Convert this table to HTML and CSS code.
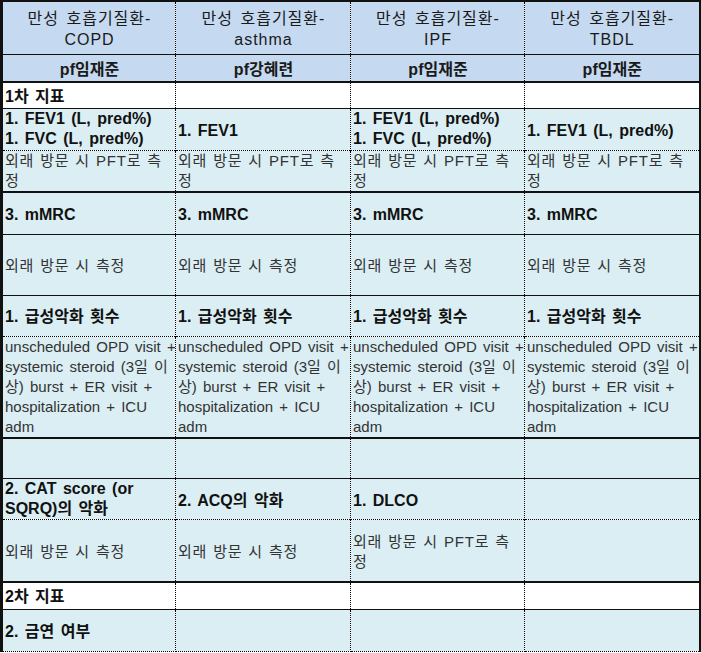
FILE: index.html
```html
<!DOCTYPE html>
<html lang="ko">
<head>
<meta charset="utf-8">
<title>만성 호흡기질환 지표</title>
<link rel="stylesheet" href="styles.css">
</head>
<body>
<table class="sheet">
  <colgroup>
    <col class="c1"><col class="c2"><col class="c3"><col class="c4">
  </colgroup>
  <tr class="r-head1 head">
    <td>만성 호흡기질환-<br>COPD</td>
    <td>만성 호흡기질환-<br>asthma</td>
    <td>만성 호흡기질환-<br>IPF</td>
    <td>만성 호흡기질환-<br>TBDL</td>
  </tr>
  <tr class="r-head2 head b-thin">
    <td class="bold">pf임재준</td>
    <td class="bold">pf강혜련</td>
    <td class="bold">pf임재준</td>
    <td class="bold">pf임재준</td>
  </tr>
  <tr class="r-sec white b-thick">
    <td class="bold">1차 지표</td><td></td><td></td><td></td>
  </tr>
  <tr class="r-fev b-thin">
    <td class="bold">1. FEV1 (L, pred%)<br>1. FVC (L, pred%)</td>
    <td class="bold pad">1. FEV1</td>
    <td class="bold">1. FEV1 (L, pred%)<br>1. FVC (L, pred%)</td>
    <td class="bold pad">1. FEV1 (L, pred%)</td>
  </tr>
  <tr class="r-pft b-dot">
    <td class="ko">외래 방문 시 PFT로 측<br>정</td>
    <td class="ko">외래 방문 시 PFT로 측<br>정</td>
    <td class="ko">외래 방문 시 PFT로 측<br>정</td>
    <td class="ko">외래 방문 시 PFT로 측<br>정</td>
  </tr>
  <tr class="r-mmrc b-thick">
    <td class="bold">3. mMRC</td>
    <td class="bold">3. mMRC</td>
    <td class="bold">3. mMRC</td>
    <td class="bold">3. mMRC</td>
  </tr>
  <tr class="r-meas b-thin">
    <td class="ko">외래 방문 시 측정</td>
    <td class="ko">외래 방문 시 측정</td>
    <td class="ko">외래 방문 시 측정</td>
    <td class="ko">외래 방문 시 측정</td>
  </tr>
  <tr class="r-exac b-thin">
    <td class="bold">1. 급성악화 횟수</td>
    <td class="bold">1. 급성악화 횟수</td>
    <td class="bold">1. 급성악화 횟수</td>
    <td class="bold">1. 급성악화 횟수</td>
  </tr>
  <tr class="r-visit b-dot">
    <td>unscheduled OPD visit +<br>systemic steroid (3일 이<br>상) burst + ER visit +<br>hospitalization + ICU<br>adm</td>
    <td>unscheduled OPD visit +<br>systemic steroid (3일 이<br>상) burst + ER visit +<br>hospitalization + ICU<br>adm</td>
    <td>unscheduled OPD visit +<br>systemic steroid (3일 이<br>상) burst + ER visit +<br>hospitalization + ICU<br>adm</td>
    <td>unscheduled OPD visit +<br>systemic steroid (3일 이<br>상) burst + ER visit +<br>hospitalization + ICU<br>adm</td>
  </tr>
  <tr class="r-empty b-thick">
    <td></td><td></td><td></td><td></td>
  </tr>
  <tr class="r-cat b-thin">
    <td class="bold">2. CAT score (or<br>SQRQ)의 악화</td>
    <td class="bold pad">2. ACQ의 악화</td>
    <td class="bold pad">1. DLCO</td>
    <td></td>
  </tr>
  <tr class="r-meas2 b-dot">
    <td class="ko">외래 방문 시 측정</td>
    <td class="ko">외래 방문 시 측정</td>
    <td class="ko">외래 방문 시 PFT로 측<br>정</td>
    <td></td>
  </tr>
  <tr class="r-sec2 white b-thick">
    <td class="bold">2차 지표</td><td></td><td></td><td></td>
  </tr>
  <tr class="r-smoke b-thin last">
    <td class="bold">2. 금연 여부</td><td></td><td></td><td></td>
  </tr>
</table>
</body>
</html>
```

FILE: styles.css
```css
html, body {
  margin: 0;
  padding: 0;
  background: #ffffff;
}

.sheet {
  border-collapse: collapse;
  table-layout: fixed;
  width: 700px;
  font-family: "Liberation Sans", "Noto Sans CJK KR", sans-serif;
  font-size: 15px;
  line-height: 20px;
  color: #333333;
  word-spacing: 2px;
}

.c1 { width: 174px; }
.c2 { width: 175px; }
.c3 { width: 174px; }
.c4 { width: 175px; }

.sheet td {
  padding: 3px 1px 0 2px;
  vertical-align: middle;
  background: #daeef3;
  border-left: 1px dotted #000;
  border-right: 1px dotted #000;
  white-space: nowrap;
  overflow: hidden;
}

.sheet td:first-child { border-left: 3px solid #111; }
.sheet td:last-child { border-right: 2px solid #111; }

.sheet tr.head td {
  background: #c5d9f1;
  text-align: center;
  color: #1a1a1a;
  font-size: 16px;
  line-height: 21px;
}

.sheet tr.r-head1 td { letter-spacing: 1px; }

.sheet tr.white td { background: #ffffff; }

.sheet .ko {
  letter-spacing: 0.8px;
  word-spacing: 1px;
}

.sheet .bold {
  font-weight: bold;
  font-size: 16px;
  color: #111111;
}

.sheet tr.r-fev td,
.sheet tr.r-pft td,
.sheet tr.r-visit td,
.sheet tr.r-cat td { padding-top: 0; }

.sheet tr td.pad { padding-top: 4px; }

.r-head1 td { border-top: 2px solid #111; }
.b-thin td { border-top: 1px solid #111; }
.b-thick td { border-top: 2px solid #111; }
.b-dot td { border-top: 1px dotted #000; }
.last td { border-bottom: 1px dotted #000; }

.r-head1 { height: 53px; }
.r-head2 { height: 28px; }
.r-sec { height: 26px; }
.r-fev { height: 42px; }
.r-pft { height: 42px; }
.r-mmrc { height: 42px; }
.r-meas { height: 61px; }
.r-exac { height: 41px; }
.r-visit { height: 102px; }
.r-empty { height: 40px; }
.r-cat { height: 41px; }
.r-meas2 { height: 63px; }
.r-sec2 { height: 27px; }
.r-smoke { height: 42px; }
```
